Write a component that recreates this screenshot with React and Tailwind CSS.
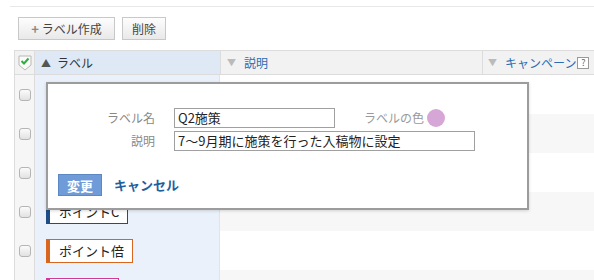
import React from 'react'

const rows = [
  { bg: 'bg-white' },
  { bg: 'bg-[#f7f7f7]' },
  { bg: 'bg-white' },
  { bg: 'bg-[#f7f7f7]', label: 'ポイントC', color: 'border-[#1f4e86]' },
  { bg: 'bg-white', label: 'ポイント倍', color: 'border-[#d9661f]' },
  { bg: 'bg-[#f7f7f7]', label: '', color: 'border-[#d0399a]' },
]

function Box() {
  return <span className="block w-[12px] h-[12px] rounded-[3px] border border-[#b5b5b5] bg-gradient-to-b from-[#fbfbfb] to-[#e2e2e2]" />
}

export default function App() {
  return (
    <div className="relative w-[594px] h-[280px] overflow-hidden bg-white text-[12px] text-[#333] whitespace-nowrap" style={{ fontFamily: '"Noto Sans CJK JP", "Noto Sans", sans-serif' }}>
      <div className="mt-[6px] ml-[10px] border-t border-[#e8e8e8]">
        <div className="flex gap-[7px] pt-[10px] pl-[8px]">
          <button className="h-[23px] w-[97px] flex items-center justify-center border border-[#c8c8c8] bg-gradient-to-b from-[#fdfdfd] to-[#e9e9e9] text-[#444] leading-none">
            <span className="text-[#888] font-bold text-[13px] mr-[3px]">+</span>ラベル作成
          </button>
          <button className="h-[23px] w-[44px] flex items-center justify-center border border-[#c8c8c8] bg-gradient-to-b from-[#fdfdfd] to-[#e9e9e9] text-[#444] leading-none">削除</button>
        </div>

        <div className="mt-[10px] ml-[4px]">
          <div className="flex h-[25px] border-t border-b border-[#dcdcdc] bg-[#f2f2f2]">
            <div className="w-[21px] flex items-center justify-center border-l border-r border-[#dcdcdc]">
              <svg width="14" height="16" viewBox="0 0 14 16">
                <path d="M1 1h12v9l-6 5-6-5z" fill="#fafafa" stroke="#b8b8b8" />
                <path d="M3.5 6l2.5 2.5 4.5-5" fill="none" stroke="#2fae3c" strokeWidth="2" />
              </svg>
            </div>
            <div className="w-[185px] flex items-center pl-[6px] bg-[#dfe9f6] text-[#333]">
              <span className="text-[10px] text-[#555] mr-[6px]">▲</span>ラベル
            </div>
            <div className="w-[262px] flex items-center pl-[6px] border-l border-[#dcdcdc] text-[#2a6db3]">
              <span className="text-[9px] text-[#bbb] mr-[8px]">▼</span>説明
            </div>
            <div className="flex-1 flex items-center pl-[5px] border-l border-[#dcdcdc] text-[#2a6db3]">
              <span className="text-[9px] text-[#bbb] mr-[8px]">▼</span>キャンペーン
              <span className="ml-[1px] w-[12px] h-[12px] border border-[#999] text-[9px] leading-[10px] text-center text-[#666] bg-white">?</span>
            </div>
          </div>

          {rows.map((r, i) => (
            <div key={i} className={`flex h-[39px] ${r.bg}`}>
              <div className="w-[21px] flex items-center justify-center border-l border-r border-[#dcdcdc] bg-[#f6f6f6]">
                <Box />
              </div>
              <div className="w-[185px] flex items-center pl-[11px] bg-[#eaf1fa] border-r border-[#dde4ec]">
                {r.label !== undefined && (
                  <span className={`h-[24px] min-w-[73px] flex items-center pl-[9px] pr-[8px] border border-l-[4px] bg-white text-[13px] text-[#222] ${r.color}`}>{r.label}</span>
                )}
              </div>
              <div className="flex-1" />
            </div>
          ))}
        </div>
      </div>

      <div className="absolute left-[46px] top-[82px] w-[483px] h-[128px] bg-white border-2 border-[#9c9c9c] shadow-[0_1px_3px_rgba(0,0,0,0.15)]">
        <div className="pt-[23px] pl-[56px]">
          <div className="flex items-center h-[22px]">
            <span className="w-[51px] text-right text-[#888]">ラベル名</span>
            <span className="ml-[19px] w-[161px] h-[20px] border border-[#a0a0a0] pl-[3px] leading-[18px] text-[13px] text-[#222]">Q2施策</span>
            <span className="ml-[29px] text-[#9a9a9a]">ラベルの色</span>
            <span className="ml-[3px] w-[18px] h-[18px] rounded-full bg-[#d6a7d6]" />
          </div>
          <div className="flex items-center h-[22px] mt-[1px]">
            <span className="w-[51px] text-right text-[#888]">説明</span>
            <span className="ml-[19px] w-[301px] h-[20px] border border-[#a0a0a0] pl-[3px] leading-[18px] text-[13px] text-[#222]">7～9月期に施策を行った入稿物に設定</span>
          </div>
        </div>
        <div className="flex items-center mt-[22px] pl-[10px]">
          <button className="w-[44px] h-[22px] bg-[#6f9bd8] border border-[#5c88c6] text-white font-bold leading-none text-[13px]">変更</button>
          <span className="ml-[12px] text-[#1f5f9e] font-bold text-[13px]">キャンセル</span>
        </div>
      </div>
    </div>
  )
}
